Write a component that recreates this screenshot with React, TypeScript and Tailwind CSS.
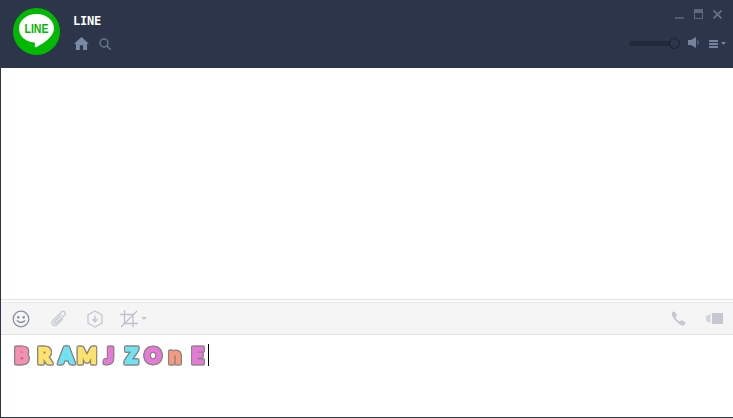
import React from 'react';

const letters = [
    {ch: 'B', cls: 'w-[17px] text-[#f78fb3]'},
    {ch: 'R', cls: 'w-[29px] text-[#fde26c]'},
    {ch: 'A', cls: 'w-[15px] text-[#6fe3f2]'},
    {ch: 'M', cls: 'w-[26px] text-[#fde26c]'},
    {ch: 'J', cls: 'w-[18px] text-[#e77ad6]'},
    {ch: 'Z', cls: 'w-[27px] text-[#6fe3f2]'},
    {ch: 'O', cls: 'w-[16px] text-[#e77ad6]'},
    {ch: 'n', cls: 'w-[28px] text-[#f79a80]'},
    {ch: 'E', cls: 'w-[17px] text-[#e77ad6]'},
]

function App() {
    return (
        <div className="w-[733px] h-[418px] flex flex-col bg-white overflow-hidden border-l border-b border-[#2c3549] font-['Liberation_Sans',sans-serif]">
            {/* header */}
            <div className="h-[68px] shrink-0 bg-[#2c3549] flex pl-[12px] pr-[5px]">
                <svg width="47" height="47" viewBox="0 0 47 47" className="mt-[8px] shrink-0">
                    <circle cx="23.500" cy="23.500" r="23.500" fill="#00b900"/>
                    <path d="M23.500 6C13.500 6 6 12.300 6 20.500 c0 7.500 5.800 13 15 14 1.200.2 1.200 1.200.8 3-.3 1.500.5 2.200 2 1.400 4.500-2.300 17.200-9.600 17.200-18.400C41 12.300 33.500 6 23.500 6z" fill="#fff"/>
                    <text x="23.500" y="25" textAnchor="middle" fill="#00b900" fontSize="12" fontWeight="700" fontFamily="'Liberation Sans', sans-serif" textLength="24" lengthAdjust="spacingAndGlyphs">LINE</text>
                </svg>
                <div className="ml-[13px] flex flex-col">
                    <div className="mt-[14px] text-[12px] leading-[15px] font-bold text-white font-['DejaVu_Sans_Mono',monospace] tracking-[-0.2px]">LINE</div>
                    <div className="mt-[8px] ml-[1px] flex items-center gap-[10px]">
                        <svg width="15" height="13" viewBox="0 0 16 14" fill="#7a8aa6">
                            <path d="M8 0 L16 7.300 L14 7.300 L14 14 L9.800 14 L9.800 9 L6.200 9 L6.200 14 L2 14 L2 7.300 L0 7.300 Z"/>
                        </svg>
                        <svg width="12" height="12" viewBox="0 0 12 12" fill="none" stroke="#67768f" strokeWidth="1.500">
                            <circle cx="5" cy="5" r="4"/>
                            <path d="M8 8 L11.500 11.500" strokeLinecap="round"/>
                        </svg>
                    </div>
                </div>
                <div className="ml-auto flex flex-col items-end">
                    <div className="mt-[9px] mr-[6px] flex items-center gap-[10px] h-[10px]">
                        <div className="w-[9px] h-[2px] mt-[7px] bg-[#505c72]"/>
                        <svg width="9" height="10" viewBox="0 0 9 10">
                            <rect x="0" y="0" width="9" height="10" fill="#5b6880"/>
                            <rect x="1" y="4" width="7" height="5" fill="#2c3549"/>
                        </svg>
                        <svg width="9" height="9" viewBox="0 0 10 10" stroke="#647189" strokeWidth="2" className="mt-[1px]">
                            <path d="M.5 .5 L9.500 9.500 M9.500 .5 L.5 9.500"/>
                        </svg>
                    </div>
                    <div className="mt-[18px] mr-[2px] flex items-center">
                        <div className="relative w-[46px] h-[5px] mt-[2px] rounded-full bg-[#222a3a]">
                            <div className="absolute right-[-5px] top-[-3px] w-[11px] h-[11px] rounded-full bg-[#2c3549] border border-[#1a2030]"/>
                        </div>
                        <svg width="12" height="11" viewBox="0 0 12 11" fill="#76839b" className="ml-[13px]">
                            <path d="M0 3 H3 L8 0 V11 L3 8 H0 Z"/>
                            <path d="M9.500 3.500 Q11 5.500 9.500 7.500" fill="none" stroke="#76839b"/>
                        </svg>
                        <div className="ml-[9px] w-[9px] flex flex-col gap-[1px] mt-[2px]">
                            <div className="h-[2px] bg-[#76839b]"/>
                            <div className="h-[2px] bg-[#76839b]"/>
                            <div className="h-[2px] bg-[#76839b]"/>
                        </div>
                        <svg width="5" height="3" viewBox="0 0 5 3" fill="#76839b" className="ml-[3px] mt-[2px]">
                            <path d="M0 0 H5 L2.500 3 Z"/>
                        </svg>
                    </div>
                </div>
            </div>

            {/* chat area */}
            <div className="flex-1"/>

            {/* toolbar */}
            <div className="h-[36px] shrink-0 bg-[#f5f5f5] border-t border-b border-t-[#e4e4e4] border-b-[#e2e2e2] flex flex-col">
                <div className="h-[3px] shrink-0 bg-[#fafafa] border-b border-[#ececec]"/>
                <div className="flex-1 flex items-center pl-[11px] pr-[10px]">
                    <svg width="18" height="18" viewBox="0 0 18 18" fill="none" stroke="#8a92a6" strokeWidth="1.300">
                        <circle cx="9" cy="9" r="7.800"/>
                        <circle cx="6.300" cy="7.300" r=".7" fill="#8a92a6"/>
                        <circle cx="11.700" cy="7.300" r=".7" fill="#8a92a6"/>
                        <path d="M5.300 10.800 Q9 14.200 12.700 10.800" strokeLinecap="round"/>
                    </svg>
                    <svg width="17" height="17" viewBox="0 0 17 17" fill="none" stroke="#c9cdd6" strokeWidth="1.500" className="ml-[20px]" strokeLinecap="round">
                        <path d="M11 5 L5 11.500 C4 12.800 5.500 14 6.700 13 L14.500 5 C16.500 2.800 13.800 0 11.500 2 L3 10.500 C.3 13.500 4 17.500 7 14.500 L12.500 9"/>
                    </svg>
                    <svg width="16" height="18" viewBox="0 0 16 18" fill="none" stroke="#c4c8d1" strokeWidth="1.300" className="ml-[20px]">
                        <path d="M8 1 L15 5 V13 L8 17 L1 13 V5 Z"/>
                        <path d="M8 5.500 V11 M5.500 9 L8 11.800 L10.500 9" strokeWidth="1.500"/>
                    </svg>
                    <svg width="18" height="18" viewBox="0 0 18 18" fill="none" stroke="#bcc1cc" strokeWidth="1.300" className="ml-[17px]">
                        <path d="M0 4.500 H13 V17.500 M4.500 0 V13.500 H18 M1 17 L17 1"/>
                    </svg>
                    <svg width="6" height="3" viewBox="0 0 6 3" fill="#c4c8d1" className="ml-[3px]">
                        <path d="M0 0 H6 L3 3 Z"/>
                    </svg>
                    <svg width="15" height="15" viewBox="0 0 15 15" fill="#c4c8d1" className="ml-auto">
                        <path d="M1 1.500 L3.500 .3 L6 4.500 L4.500 6 C5 8 7 10 9 10.500 L10.500 9 L14.500 11.500 L13.500 14 C12 15 9 14.500 5.500 10.500 C1.500 6.500 .3 3.500 1 1.500 Z"/>
                    </svg>
                    <svg width="17" height="11" viewBox="0 0 17 11" fill="#c4c8d1" className="ml-[20px]">
                        <path d="M0 3 L4.500 1 V10 L0 8 Z" fill="#d2d5dc"/>
                        <rect x="6" y="0" width="11" height="11"/>
                    </svg>
                </div>
            </div>

            {/* input */}
            <div className="h-[82px] shrink-0 flex items-start pl-[12px] pt-[9px]">
                <div className="flex h-[22px] items-center text-[20px] font-bold leading-[22px] font-['Lato',sans-serif] [-webkit-text-stroke:2.5px_currentColor] [stroke-linejoin:round] [filter:drop-shadow(1px_0_0_#8a8584)_drop-shadow(-1px_0_0_#8a8584)_drop-shadow(0_1px_0_#8a8584)_drop-shadow(0_-1px_0_#8a8584)]">
                    {letters.map((l, i) => (
                        <span key={i} className={`flex justify-center ${l.cls}`}>{l.ch}</span>
                    ))}
                </div>
                <div className="w-[1px] h-[22px] bg-black ml-[2px]"/>
            </div>
        </div>
    );
}

export default App;
